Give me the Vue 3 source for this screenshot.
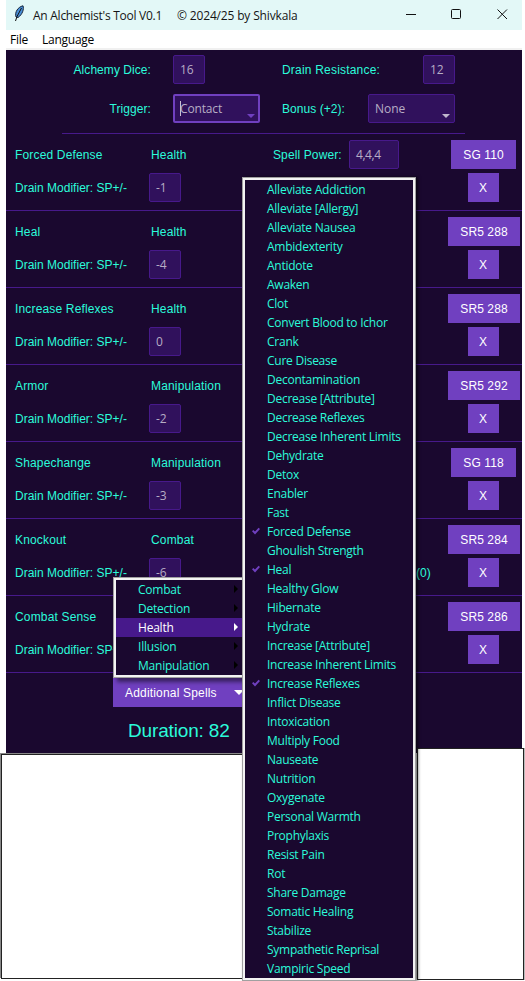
<script setup>
const spells = [
  { name: 'Forced Defense', type: 'Health', mod: '-1', ref: 'SG 110', power: '4,4,4' },
  { name: 'Heal', type: 'Health', mod: '-4', ref: 'SR5 288' },
  { name: 'Increase Reflexes', type: 'Health', mod: '0', ref: 'SR5 288' },
  { name: 'Armor', type: 'Manipulation', mod: '-2', ref: 'SR5 292' },
  { name: 'Shapechange', type: 'Manipulation', mod: '-3', ref: 'SG 118' },
  { name: 'Knockout', type: 'Combat', mod: '-6', ref: 'SR5 284', note: '(0)' },
  { name: 'Combat Sense', type: '', mod: '', ref: 'SR5 286' },
]
const categories = ['Combat', 'Detection', 'Health', 'Illusion', 'Manipulation']
const healthSpells = [
  'Alleviate Addiction', 'Alleviate [Allergy]', 'Alleviate Nausea', 'Ambidexterity', 'Antidote',
  'Awaken', 'Clot', 'Convert Blood to Ichor', 'Crank', 'Cure Disease', 'Decontamination',
  'Decrease [Attribute]', 'Decrease Reflexes', 'Decrease Inherent Limits', 'Dehydrate', 'Detox',
  'Enabler', 'Fast', 'Forced Defense', 'Ghoulish Strength', 'Heal', 'Healthy Glow', 'Hibernate',
  'Hydrate', 'Increase [Attribute]', 'Increase Inherent Limits', 'Increase Reflexes',
  'Inflict Disease', 'Intoxication', 'Multiply Food', 'Nauseate', 'Nutrition', 'Oxygenate',
  'Personal Warmth', 'Prophylaxis', 'Resist Pain', 'Rot', 'Share Damage', 'Somatic Healing',
  'Stabilize', 'Sympathetic Reprisal', 'Vampiric Speed',
]
const checked = new Set(['Forced Defense', 'Heal', 'Increase Reflexes'])
</script>

<template>
  <div class="desktop">
    <div class="window">
      <header class="titlebar">
        <svg class="feather" width="11" height="17" viewBox="0 0 11 17">
          <path d="M2 12C0.5 7 4 2 9 0.8C10.2 4 8.5 9.5 4 12.5Z" fill="#4a90d9" stroke="#152238" stroke-width="1" />
          <path d="M7.5 3L3 11.5L1.5 16" fill="none" stroke="#111" stroke-width="1" />
        </svg>
        <span class="app-name">An Alchemist's Tool V0.1</span>
        <span class="copyright">© 2024/25 by Shivkala</span>
        <svg class="controls" width="106" height="12" viewBox="0 0 106 12" fill="none" stroke="#111" stroke-width="1">
          <path d="M0 6.5H10" />
          <rect x="45.5" y="1.5" width="9" height="9" rx="1" />
          <path d="M91.5 1.5L101 11M101 1.5L91.5 11" />
        </svg>
      </header>
      <nav class="menubar"><span class="file">File</span><span class="language">Language</span></nav>

      <main class="body">
        <section class="settings">
          <label class="right">Alchemy Dice:</label>
          <div class="field">16</div>
          <label class="second">Drain Resistance:</label>
          <div class="field end">12</div>
          <label class="right">Trigger:</label>
          <div class="field select focus"><i class="caret"></i>Contact<i class="arrow"></i></div>
          <label class="second bonus">Bonus (+2):</label>
          <div class="field select end">None<i class="arrow"></i></div>
        </section>
        <div class="divider"></div>

        <section v-for="s in spells" :key="s.name" class="spell">
          <div class="line">
            <span class="name">{{ s.name }}</span>
            <span class="type">{{ s.type }}</span>
            <template v-if="s.power">
              <span class="power-label">Spell Power:</span>
              <div class="field power">{{ s.power }}</div>
            </template>
            <div class="action"><button :class="['btn', s.ref.length < 7 ? 'short' : 'long']">{{ s.ref }}</button></div>
          </div>
          <div class="line">
            <span class="name drain">Drain Modifier: SP+/-</span>
            <div class="field mod">{{ s.mod }}</div>
            <span v-if="s.note" class="note">{{ s.note }}</span>
            <div class="action"><button class="btn remove">X</button></div>
          </div>
        </section>

        <button class="btn additional">Additional Spells<i class="arrow"></i></button>
        <div class="duration">Duration: 82</div>
      </main>
    </div>

    <div class="panel panel-left"></div>
    <div class="panel panel-right"></div>

    <div class="popup categories">
      <div v-for="c in categories" :key="c" :class="['item', { active: c === 'Health' }]">
        <span>{{ c }}</span>
        <svg width="4" height="8" viewBox="0 0 4 8"><path d="M0 0L4 4L0 8Z" fill="currentColor" /></svg>
      </div>
    </div>
    <div class="popup spell-list">
      <div v-for="h in healthSpells" :key="h" class="item">
        <svg v-if="checked.has(h)" class="check" width="8" height="8" viewBox="0 0 8 8"><path d="M0.7 3.6L3 6L7.3 1.3" fill="none" stroke="#7040c0" stroke-width="1.9" /></svg>
        <span>{{ h }}</span>
      </div>
    </div>
  </div>
</template>

<style>
body { margin: 0; background: #fff; overflow: hidden; }
</style>

<style scoped>
.desktop { position: relative; width: 525px; height: 981px; overflow: hidden; background: #fff; font: 12px/19px "Liberation Sans", Arial, sans-serif; }
.window { width: 516px; margin-left: 6px; height: 753px; display: flex; flex-direction: column; background: #1a082f; }
.titlebar, .menubar, .popup, .field { font-family: "Open Sans", "Noto Sans", sans-serif; }
.titlebar { display: flex; align-items: center; height: 30px; background: #e3f8f7; color: #151515; font-size: 12px; letter-spacing: -0.26px; white-space: nowrap; box-sizing: border-box; }
.feather { margin: 0 0 3px 8px; }
.app-name { width: 144px; margin-left: 8px; }
.copyright { width: 130px; letter-spacing: -0.16px; }
.controls { margin-left: 99px; margin-bottom: 2px; }
.menubar { display: flex; height: 18px; border-bottom: 2px solid #f0f0f0; background: #fff; color: #000; line-height: 20px; letter-spacing: -0.25px; }
.file { width: 32px; margin-left: 4px; }
.body { flex: 1; color: #2bfbda; }
.settings { display: grid; grid-template-columns: 145px 22px 87px 22px 86px 87px; row-gap: 10px; padding: 5px 0 10px; align-items: center; }
.settings label { grid-column: 1; padding-top: 2px; }
.settings .right { text-align: right; letter-spacing: 0.06px; }
.settings .field { grid-column: 3; }
.settings .second { grid-column: 5; white-space: nowrap; letter-spacing: 0.2px; }
.settings .second.bonus { letter-spacing: 0.05px; }
.settings .end { grid-column: 6; justify-self: end; }
.field { position: relative; box-sizing: border-box; width: 32px; height: 29px; padding-left: 6px; border: 1px solid #47198b; border-radius: 2px; background: #30115c; color: #b7adc5; line-height: 27px; font-size: 12px; letter-spacing: -0.2px; }
.field.select { width: 87px; letter-spacing: 0; }
.field.focus { border: 2px solid #7040c0; padding-left: 5px; line-height: 25px; letter-spacing: -0.15px; }
.caret { position: absolute; left: 5px; top: 5px; width: 1px; height: 15px; background: #c9c1d4; }
.arrow { position: absolute; right: 4px; bottom: 4px; border: 4px solid transparent; border-top-color: #c0b7cd; border-bottom: 0; }
.focus .arrow { right: 3px; bottom: 3px; border-top-color: #7040c0; }
.divider { width: 403px; height: 1px; margin-left: 56px; background: #47198b; }
.spell { display: grid; row-gap: 4px; padding: 6px 0 8px; border-bottom: 1px solid #47198b; }
.line { display: flex; align-items: center; height: 29px; white-space: nowrap; }
.line > span { padding-top: 2px; }
.name { width: 136px; margin-left: 9px; letter-spacing: 0.16px; }
.drain { width: 134px; letter-spacing: 0.01px; }
.type { width: 122px; letter-spacing: 0.16px; }
.power-label { width: 76px; letter-spacing: 0.12px; }
.power { width: 50px; letter-spacing: -0.45px; }
.note { margin-left: 235px; }
.action { display: flex; justify-content: center; width: 72px; margin: 0 2px 0 auto; }
.btn { box-sizing: border-box; height: 29px; padding: 2px 0 0; border: 0; background: #7040c0; color: #fff; font: 12px/27px "Liberation Sans", Arial, sans-serif; letter-spacing: 0.1px; }
.long { width: 72px; }
.short { width: 65px; margin-right: 1px; }
.remove { width: 31px; margin-right: 2px; }
.additional { position: relative; display: block; width: 144px; margin: 5px 0 0 107px; padding-left: 12px; text-align: left; letter-spacing: 0.18px; }
.additional .arrow { right: 13px; bottom: 12px; border-width: 5px 5px 0; border-top-color: #fff; }
.duration { margin: 12px 0 0 122px; font-size: 19px; line-height: 24px; letter-spacing: -0.15px; }
.panel { position: absolute; box-sizing: border-box; background: #fff; border: 1px solid #222; }
.panel-left { left: 1px; top: 754px; width: 242px; height: 225px; box-shadow: -1px -1px 0 #888; }
.panel-right { left: 417px; top: 748px; width: 107px; height: 232px; box-shadow: 1px 0 0 #bbb; }
.popup { position: absolute; box-sizing: border-box; border: 1px solid #a0a0a0; color: #2bfbda; box-shadow: 4px 4px 4px rgba(0, 0, 0, 0.5); white-space: nowrap; letter-spacing: -0.25px; }
.item { display: flex; align-items: center; position: relative; height: 19px; padding-left: 22px; background: #1a082f; }
.categories { left: 113px; top: 577px; width: 136px; padding: 2px; background: #f3f3f3; letter-spacing: -0.22px; }
.categories .item svg { position: absolute; left: 118px; top: 5px; color: #000; }
.categories .active { background: #47198b; color: #fff; }
.categories .active svg { color: #fff; }
.spell-list { left: 242px; top: 177px; width: 174px; padding: 2px; background: #f3f3f3; box-shadow: 2px 0 3px rgba(0, 0, 0, 0.6); }
.check { position: absolute; left: 7px; top: 5px; }
</style>
